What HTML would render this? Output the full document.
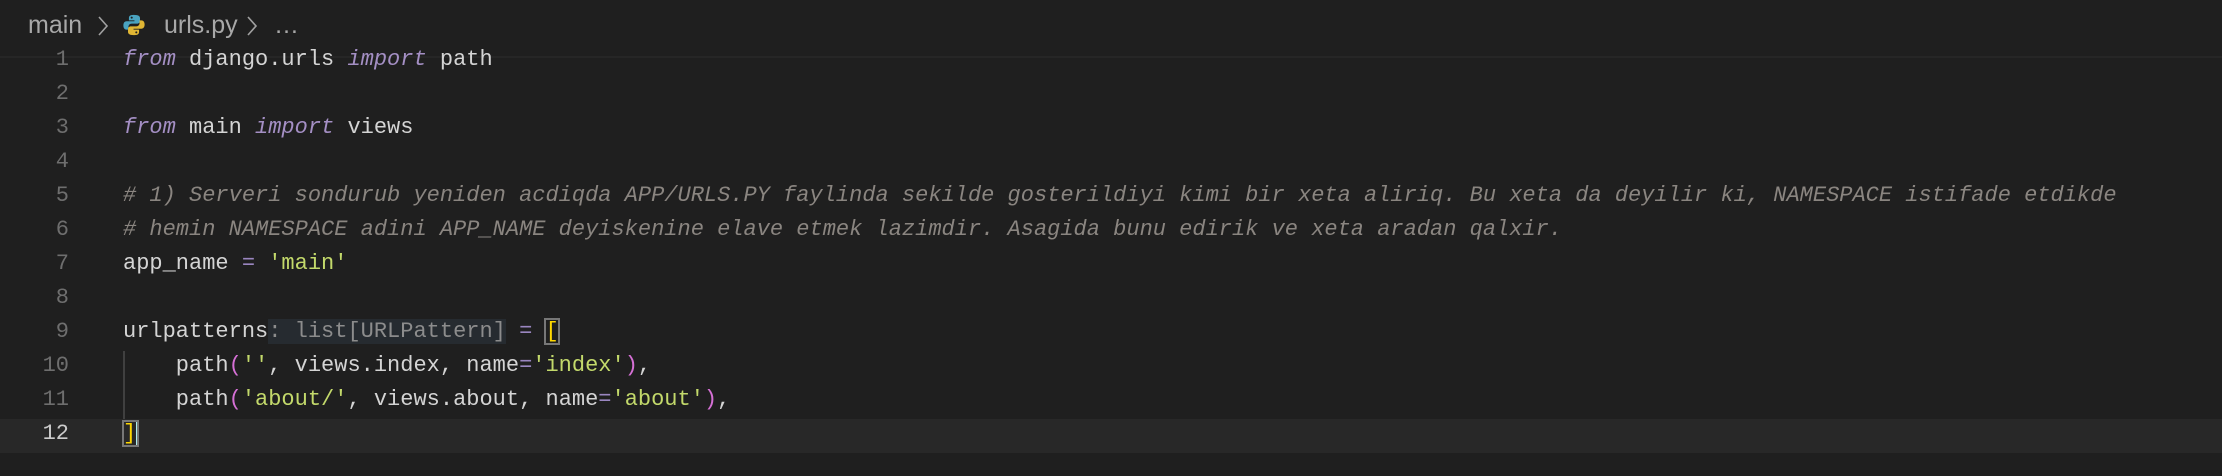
<!DOCTYPE html>
<html><head><style>
body{margin:0;width:2222px;height:476px;background:#1f1f1f;overflow:hidden;position:relative}
.bc{position:absolute;top:8px;height:34px;font:25px "Liberation Sans",sans-serif;color:#a8a8a8;line-height:34px;white-space:pre}
.sep{position:absolute;left:0;top:56px;width:2222px;height:2px;background:#262626}
.ln{position:absolute;left:0;width:69px;text-align:right;font:22px "Liberation Mono",monospace;color:#6e6e6e;line-height:34px}
.code{position:absolute;left:123px;font:22px "Liberation Mono",monospace;color:#d4d4d4;line-height:34px;white-space:pre}
.k{color:#a48fc4;font-style:italic}
.c{color:#8a8580;font-style:italic}
.s{color:#c3d96b}
.p{color:#d670d6}
.o{color:#9a86c0}
.h{background:#262b30;color:#8c8c8c}
.cur{position:absolute;left:0;top:419px;width:2222px;height:34px;background:#282828}
.guide{position:absolute;left:123px;top:351px;width:2px;height:68px;background:#404040}
.y{color:#ffd700}
</style></head><body>
<div class="bc" style="left:28px">main</div>
<svg style="position:absolute;left:96px;top:14px" width="14" height="24" viewBox="0 0 14 24"><path d="M3 3l8 9-8 9" stroke="#a0a0a0" stroke-width="1.6" fill="none"/></svg>
<svg style="position:absolute;left:122px;top:12px" width="24" height="26" viewBox="0 0 26 26"><path d="M12.5 2c-4 0-5 1.5-5 3.5V8h6v1H5C3 9 1.5 10.5 1.5 13.5S3 18 5 18h2v-3c0-2 1.5-3.5 3.5-3.5h6c1.7 0 3-1.3 3-3V5.5C19.5 3.5 18 2 12.5 2z" fill="#4aa3c0"/><path d="M13.5 24c4 0 5-1.5 5-3.5V18h-6v-1H21c2 0 3.5-1.5 3.5-4.5S23 8 21 8h-2v3c0 2-1.5 3.5-3.5 3.5h-6c-1.7 0-3 1.3-3 3v3c0 2 1.5 3.5 6 3.5z" fill="#e0b634"/><circle cx="10.5" cy="5" r="1.1" fill="#1f1f1f"/><circle cx="15.5" cy="21" r="1.1" fill="#1f1f1f"/></svg>
<div class="bc" style="left:164px">urls.py</div>
<svg style="position:absolute;left:245px;top:14px" width="14" height="24" viewBox="0 0 14 24"><path d="M3 3l8 9-8 9" stroke="#a0a0a0" stroke-width="1.6" fill="none"/></svg>
<div class="bc" style="left:274px">…</div>
<div class="sep"></div>
<div class="cur"></div>
<div class="guide"></div>
<div class="ln" style="top:43px">1<br>2<br>3<br>4<br>5<br>6<br>7<br>8<br>9<br>10<br>11<br><span style="color:#ccc">12</span></div>
<div class="code" style="top:43px"><span class="k">from</span> django.urls <span class="k">import</span> path

<span class="k">from</span> main <span class="k">import</span> views

<span class="c"># 1) Serveri sondurub yeniden acdiqda APP/URLS.PY faylinda sekilde gosterildiyi kimi bir xeta aliriq. Bu xeta da deyilir ki, NAMESPACE istifade etdikde</span>
<span class="c"># hemin NAMESPACE adini APP_NAME deyiskenine elave etmek lazimdir. Asagida bunu edirik ve xeta aradan qalxir.</span>
app_name <span class="o">=</span> <span class="s">'main'</span>

urlpatterns<span class="h">: list[URLPattern]</span> <span class="o">=</span> <span class="y" style="outline:2px solid #777;outline-offset:-1px">[</span>
    path<span class="p">(</span><span class="s">''</span>, views.index, name<span class="o">=</span><span class="s">'index'</span><span class="p">)</span>,
    path<span class="p">(</span><span class="s">'about/'</span>, views.about, name<span class="o">=</span><span class="s">'about'</span><span class="p">)</span>,
<span class="y" style="outline:2px solid #777;outline-offset:-1px;border-right:2px solid #aeeeee">]</span></div>
</body></html>
